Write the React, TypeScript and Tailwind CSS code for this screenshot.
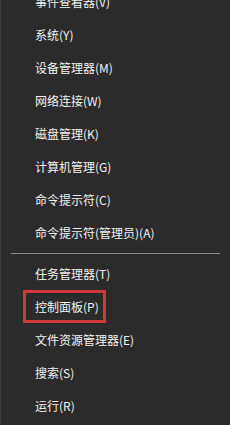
const top = [
  "事件查看器(V)",
  "系统(Y)",
  "设备管理器(M)",
  "网络连接(W)",
  "磁盘管理(K)",
  "计算机管理(G)",
  "命令提示符(C)",
  "命令提示符(管理员)(A)",
];

const bottom = ["任务管理器(T)", "控制面板(P)", "文件资源管理器(E)", "搜索(S)", "运行(R)"];

function Item({ label, boxed }: { label: string; boxed?: boolean }) {
  return (
    <div className="h-[33px] flex items-center pl-[34px]">
      {boxed ? (
        <span className="-ml-[12px] pl-[9px] pr-[4px] h-[33px] flex items-center border-[3px] border-[#d0383c]">
          {label}
        </span>
      ) : (
        <span>{label}</span>
      )}
    </div>
  );
}

export default function App() {
  return (
    <div
      className="w-[230px] h-[425px] overflow-hidden bg-[#2b2b2b] border-l border-[#3c3c3c] text-[12px] text-[#f2f2f2]"
      style={{ fontFamily: '"Noto Sans CJK SC", "Noto Sans", sans-serif' }}
    >
      <div className="-mt-[15px]">
        {top.map((t) => (
          <Item key={t} label={t} />
        ))}
        <div className="h-[8px] flex items-center px-[10px]">
          <div className="h-px w-full bg-[#8a8a8a]" />
        </div>
        {bottom.map((t) => (
          <Item key={t} label={t} boxed={t === "控制面板(P)"} />
        ))}
      </div>
    </div>
  );
}
